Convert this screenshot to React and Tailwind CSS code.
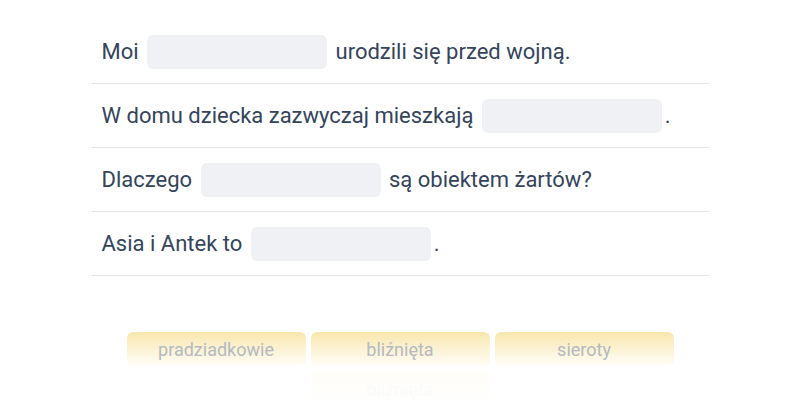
import React from "react";

const Blank = () => (
  <span className="inline-block align-middle w-[180px] h-[34px] mx-[3px] rounded-md bg-[#eff1f5]" />
);

const rows = [
  ["Moi ", " urodzili się przed wojną."],
  ["W domu dziecka zazwyczaj mieszkają ", "."],
  ["Dlaczego ", " są obiektem żartów?"],
  ["Asia i Antek to ", "."],
];

const Chip = ({ children, faint }) => (
  <div
    className={
      "w-[179px] h-[34px] rounded-md flex items-center justify-center text-[18px] " +
      (faint
        ? "bg-gradient-to-b from-[#fefdf8] to-[#ffffff] text-[#fbfbfb]"
        : "bg-gradient-to-b from-[#f8e7ad] to-[#fffdf8] text-[#b5b9c0]")
    }
  >
    {children}
  </div>
);

export default function App() {
  return (
    <div
      className="w-[800px] h-[400px] bg-white overflow-hidden"
      style={{ fontFamily: "Roboto, 'Noto Sans', sans-serif" }}
    >
      <div className="w-[617px] mx-auto pt-[20px]">
        {rows.map(([a, b], i) => (
          <div
            key={i}
            className="h-[64px] border-b border-[#e2e2e2] flex items-center pl-[10px] text-[22px] text-[#34445b] whitespace-pre"
          >
            <span>{a}</span>
            <Blank />
            <span>{b}</span>
          </div>
        ))}
      </div>
      <div className="mt-[56px] flex flex-wrap justify-center gap-x-[5px] gap-y-[6px] w-[548px] mx-auto">
        <Chip>pradziadkowie</Chip>
        <Chip>bliźnięta</Chip>
        <Chip>sieroty</Chip>
        <Chip faint>bliźnięta</Chip>
      </div>
    </div>
  );
}
